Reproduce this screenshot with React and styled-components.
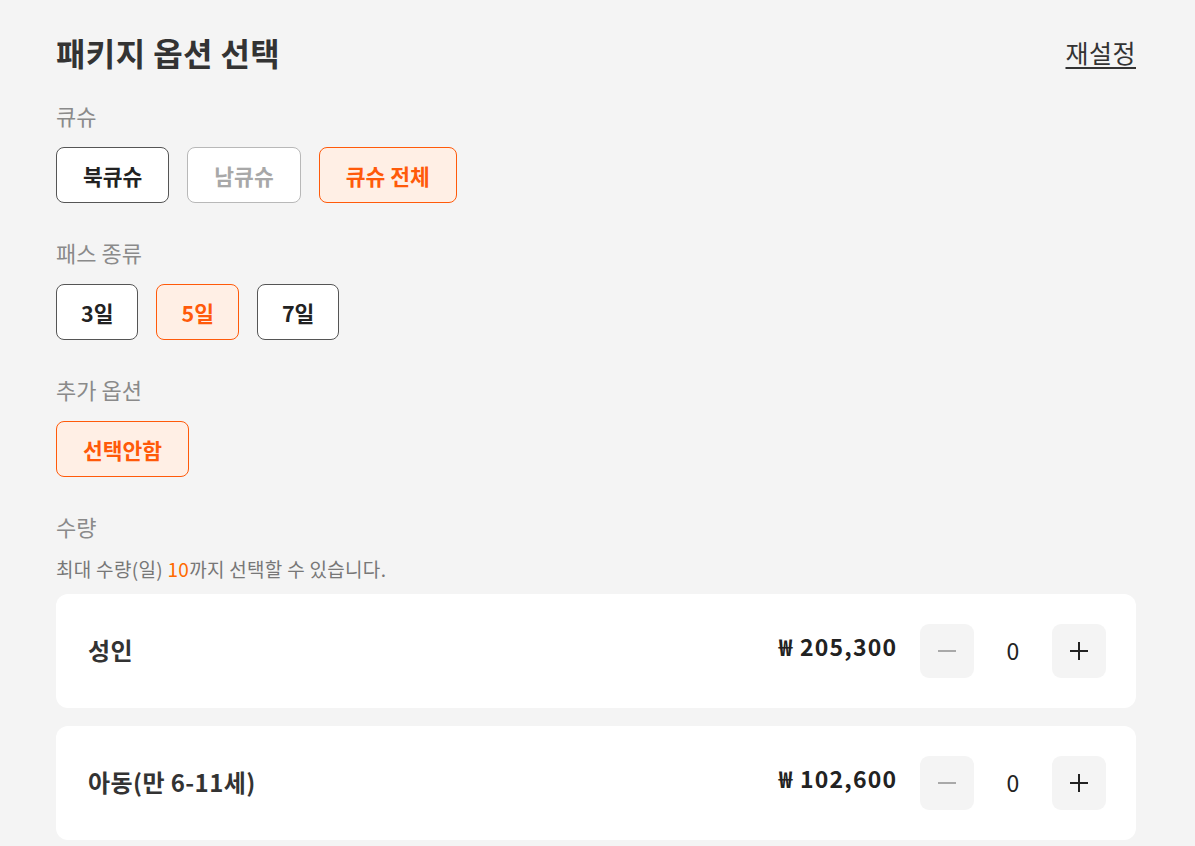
import React, { useState } from 'react';
import styled, { createGlobalStyle, css } from 'styled-components';

const GlobalStyle = createGlobalStyle`
  html, body {
    margin: 0;
    padding: 0;
    background: #f4f4f4;
  }
  body {
    font-family: 'Noto Sans CJK KR', 'Noto Sans', sans-serif;
    color: #222;
  }
  * { box-sizing: border-box; }
`;

const regionOptions = [
  { label: '북큐슈', state: 'default' },
  { label: '남큐슈', state: 'disabled' },
  { label: '큐슈 전체', state: 'active' },
];
const passOptions = [
  { label: '3일', state: 'default' },
  { label: '5일', state: 'active' },
  { label: '7일', state: 'default' },
];
const extraOptions = [{ label: '선택안함', state: 'active' }];

const tickets = [
  { name: '성인', price: '205,300' },
  { name: '아동(만 6-11세)', price: '102,600' },
];

function MinusIcon() {
  return (
    <svg width='20' height='20' viewBox='0 0 20 20'>
      <path d='M1 10h18' stroke='#a9a9a9' strokeWidth='2' />
    </svg>
  );
}

function PlusIcon() {
  return (
    <svg width='20' height='20' viewBox='0 0 20 20'>
      <path d='M1 10h18M10 1v18' stroke='#222' strokeWidth='2' />
    </svg>
  );
}

export default function App() {
  const [counts, setCounts] = useState(tickets.map(() => 0));
  return (
    <Page>
      <GlobalStyle />
      <Header>
        <Title>패키지 옵션 선택</Title>
        <Reset>재설정</Reset>
      </Header>

      <Section>
        <Label>큐슈</Label>
        <Options>
          {regionOptions.map((o) => (
            <Chip key={o.label} $state={o.state}>{o.label}</Chip>
          ))}
        </Options>
      </Section>

      <Section>
        <Label>패스 종류</Label>
        <Options>
          {passOptions.map((o) => (
            <Chip key={o.label} $state={o.state} $narrow>{o.label}</Chip>
          ))}
        </Options>
      </Section>

      <Section>
        <Label>추가 옵션</Label>
        <Options>
          {extraOptions.map((o) => (
            <Chip key={o.label} $state={o.state}>{o.label}</Chip>
          ))}
        </Options>
      </Section>

      <Section>
        <Label>수량</Label>
        <Helper>
          최대 수량(일) <em>10</em>까지 선택할 수 있습니다.
        </Helper>
        <Cards>
          {tickets.map((t, i) => (
            <Card key={t.name}>
              <TicketName>{t.name}</TicketName>
              <Right>
                <Price>₩ {t.price}</Price>
                <Stepper>
                  <StepButton>
                    <MinusIcon />
                  </StepButton>
                  <Count>{counts[i]}</Count>
                  <StepButton
                    onClick={() =>
                      setCounts((c) => c.map((v, j) => (j === i ? v + 1 : v)))
                    }
                  >
                    <PlusIcon />
                  </StepButton>
                </Stepper>
              </Right>
            </Card>
          ))}
        </Cards>
      </Section>
    </Page>
  );
}

const Page = styled.div`
  min-height: 100vh;
  padding: 32px 59px 40px 56px;
  background: #f4f4f4;
`;
const Header = styled.div`
  display: flex;
  justify-content: space-between;
  align-items: center;
  height: 40px;
  margin-bottom: 29px;
`;
const Title = styled.h2`
  margin: 0;
  font-size: 32px;
  font-weight: 700;
  letter-spacing: 0.4px;
  color: #333;
  line-height: 40px;
`;
const Reset = styled.button`
  border: none;
  background: none;
  padding: 0;
  font-family: inherit;
  font-size: 25px;
  letter-spacing: 0.5px;
  color: #333;
  text-decoration: underline;
  text-decoration-thickness: 2px;
  text-underline-offset: 4px;
  cursor: pointer;
`;
const Section = styled.section`
  margin-bottom: 35px;
`;
const Label = styled.div`
  font-size: 22px;
  line-height: 28px;
  color: #8a8a8a;
  margin-bottom: 18px;
`;
const Options = styled.div`
  display: flex;
  gap: 18px;
`;
const Chip = styled.button`
  height: 56px;
  padding: 0 ${(p) => (p.$narrow ? '24px' : '26px')};
  border-radius: 8px;
  font-family: inherit;
  font-size: 21.5px;
  font-weight: 700;
  background: #fff;
  border: 1px solid #555;
  color: #222;
  cursor: pointer;
  ${(p) =>
    p.$state === 'disabled' &&
    css`
      border-color: #b8b8b8;
      color: #a8a8a8;
    `}
  ${(p) =>
    p.$state === 'active' &&
    css`
      border-color: #ff5a0a;
      background: #ffefe5;
      color: #ff5a0a;
    `}
`;
const Helper = styled.p`
  margin: -1px 0 13px;
  font-size: 19px;
  letter-spacing: 0.3px;
  line-height: 24px;
  color: #777;
  em {
    font-style: normal;
    color: #ff6a00;
  }
`;
const Cards = styled.div`
  display: flex;
  flex-direction: column;
  gap: 18px;
`;
const Card = styled.div`
  display: flex;
  justify-content: space-between;
  align-items: center;
  height: 114px;
  padding: 0 30px 0 32px;
  background: #fff;
  border-radius: 12px;
`;
const TicketName = styled.div`
  font-size: 24px;
  font-weight: 700;
  letter-spacing: 0.4px;
  color: #333;
  margin-top: -3px;
`;
const Right = styled.div`
  display: flex;
  align-items: center;
  gap: 24px;
`;
const Price = styled.div`
  font-size: 23px;
  font-weight: 700;
  letter-spacing: 1.2px;
  margin-right: -1.2px;
  color: #222;
  margin-top: -10px;
`;
const Stepper = styled.div`
  display: flex;
  align-items: center;
`;
const StepButton = styled.button`
  width: 54px;
  height: 54px;
  border: none;
  border-radius: 9px;
  background: #f4f4f4;
  display: flex;
  align-items: center;
  justify-content: center;
  padding: 0;
  cursor: pointer;
`;
const Count = styled.div`
  width: 78px;
  text-align: center;
  font-size: 23px;
  color: #222;
  margin-top: -2px;
`;
